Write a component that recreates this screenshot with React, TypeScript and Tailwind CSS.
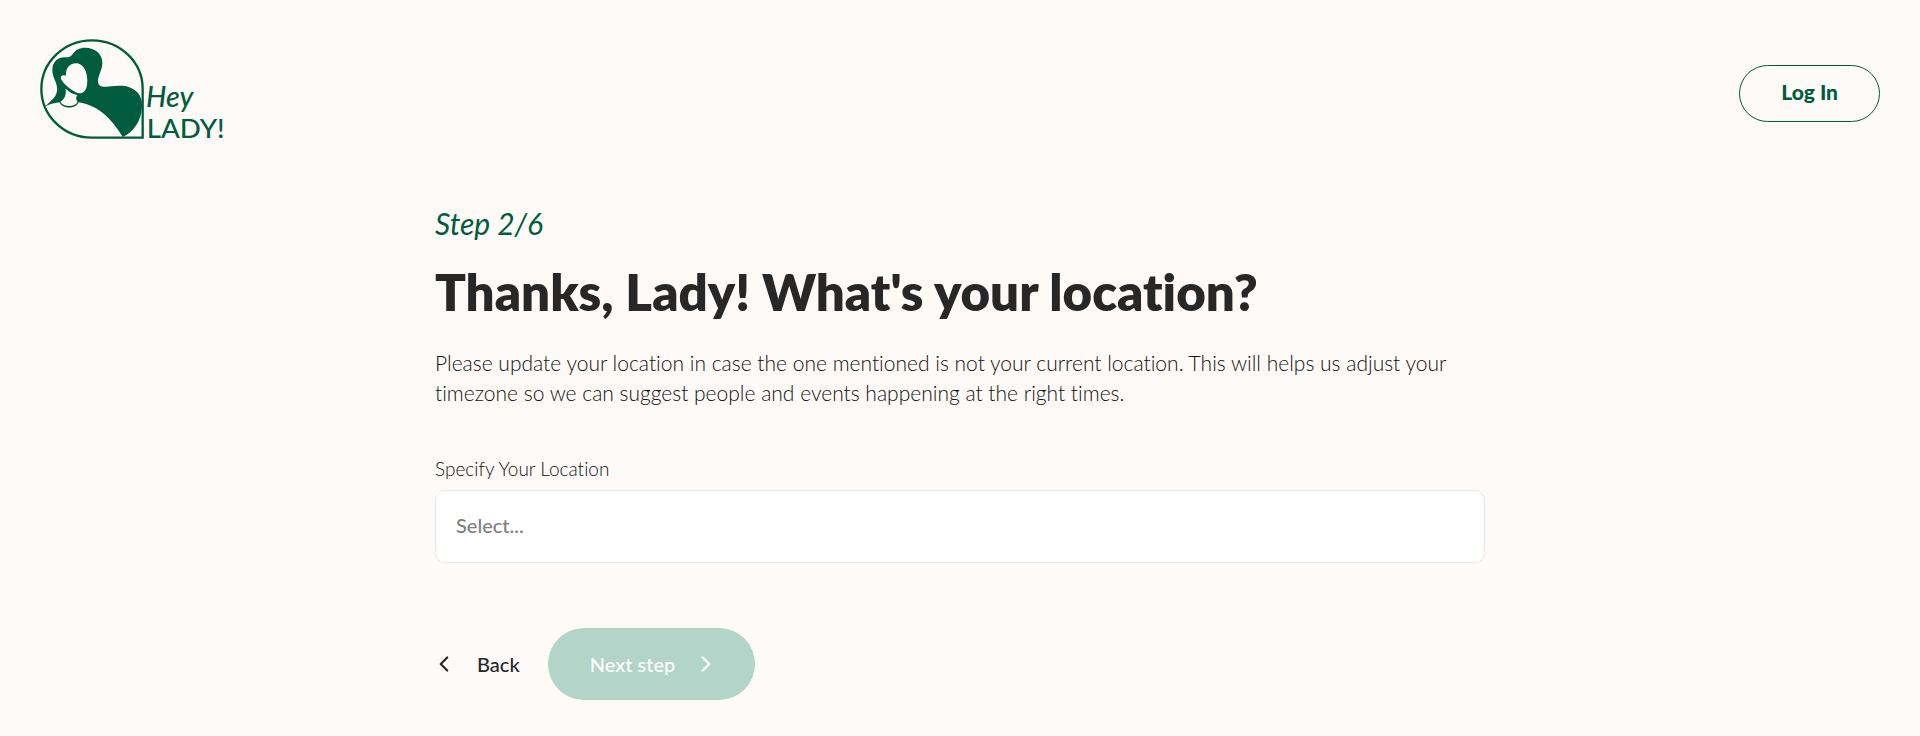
import { useState } from 'react';
import { ChevronLeft, ChevronRight } from 'lucide-react';

const locations = ['Africa', 'Asia', 'Europe', 'North America', 'Oceania', 'South America'];

const Logo = () => (
  <svg viewBox="30 27 576 324" className="h-[108px] w-[192px]" role="img" aria-label="Hey Lady!">
    <path
      d="M186 323 A152 146 0 0 1 186 31 A152 146 0 0 1 338 178 V323 Z"
      fill="none"
      stroke="#005c3f"
      strokeWidth="7"
    />
    {/* hair and shoulder */}
    <path
      d="M44 230 C70 208 84 196 81 172 C78 150 67 142 67 120 C67 95 84 81 106 82 C118 82 122 80 128 72 C136 60 148 53 165 53 C196 53 217 72 217 98 C217 122 202 138 204 156 C206 168 214 171 230 170 C262 168 278 165 294 170 C320 178 336 196 336 226 C336 270 312 306 278 321 C248 272 208 226 146 217 C138 238 98 238 88 217 C72 219 58 223 44 230 Z"
      fill="#005c3f"
    />
    {/* face */}
    <path
      d="M108 137 C106 114 120 100 138 100 C160 100 172 124 172 152 C172 176 164 190 148 190 C136 190 104 166 95 151 C89 141 94 133 108 137 Z"
      fill="#fefaf7"
    />
    {/* neck */}
    <path
      d="M107 176 C118 186 129 193 142 195 C136 203 138 209 143 216 C134 232 101 232 91 215 C105 207 109 194 107 176 Z"
      fill="#fefaf7"
    />
    <text
      x="348" y="230" fontSize="86" fill="#005c3f"
      className="font-['Lato','Liberation_Sans',sans-serif] font-medium italic"
    >
      Hey
    </text>
    <text
      x="350" y="325" fontSize="83" fill="#005c3f"
      className="font-['Lato','Liberation_Sans',sans-serif] font-medium"
    >
      LADY!
    </text>
  </svg>
);

const App = () => {
  const [location, setLocation] = useState('');

  return (
    <div className="min-h-screen bg-[#fefaf7] font-['Lato','Liberation_Sans',sans-serif] text-[#272727] [font-variant-ligatures:none]">
      <header className="flex items-start justify-between px-10 pt-[39px]">
        <a href="#home">
          <Logo />
        </a>
        <a
          href="#login"
          className="mt-[26px] flex h-[57px] items-center rounded-full border border-[#005c3f] px-[41px] pb-1 text-[21px] font-black text-[#005c3f]"
        >
          Log In
        </a>
      </header>

      <main className="mx-auto max-w-[1050px] pt-[54px] pb-8">
        <p className="text-[30px] leading-[44px] italic text-[#005c3f]">Step 2/6</p>
        <h1 className="mt-[17px] text-[51px] leading-[60px] font-extrabold">
          Thanks, Lady! What's your location?
        </h1>
        <p className="mt-[26px] text-[21px] leading-[30px] font-light text-[#111]">
          Please update your location in case the one mentioned is not your current location. This will helps us adjust your
          timezone so we can suggest people and events happening at the right times.
        </p>

        <form onSubmit={(e) => e.preventDefault()}>
          <label htmlFor="location" className="mt-[47px] block text-[19px] leading-7 font-light text-[#111]">
            Specify Your Location
          </label>
          <select
            id="location"
            value={location}
            onChange={(e) => setLocation(e.target.value)}
            className="mt-[7px] h-[73px] w-full appearance-none rounded-[10px] border border-[#e8e8e8] bg-white px-5 pb-1 text-[20px] font-medium text-[#808080]"
          >
            <option value="" disabled>Select...</option>
            {locations.map((name) => (
              <option key={name} value={name}>{name}</option>
            ))}
          </select>

          <div className="mt-[65px] flex items-center gap-7 text-[20px] font-medium">
            <button type="button" className="-ml-1 flex items-center gap-5">
              <ChevronLeft size={26} strokeWidth={2} />
              Back
            </button>
            <button
              type="submit"
              disabled={!location}
              className="flex h-[72px] items-center gap-[18px] rounded-full bg-[#005c3f] pr-9 pl-[42px] text-white disabled:bg-[#b3d4c8]"
            >
              Next step
              <ChevronRight size={26} strokeWidth={2} />
            </button>
          </div>
        </form>
      </main>
    </div>
  );
};

export default App;
